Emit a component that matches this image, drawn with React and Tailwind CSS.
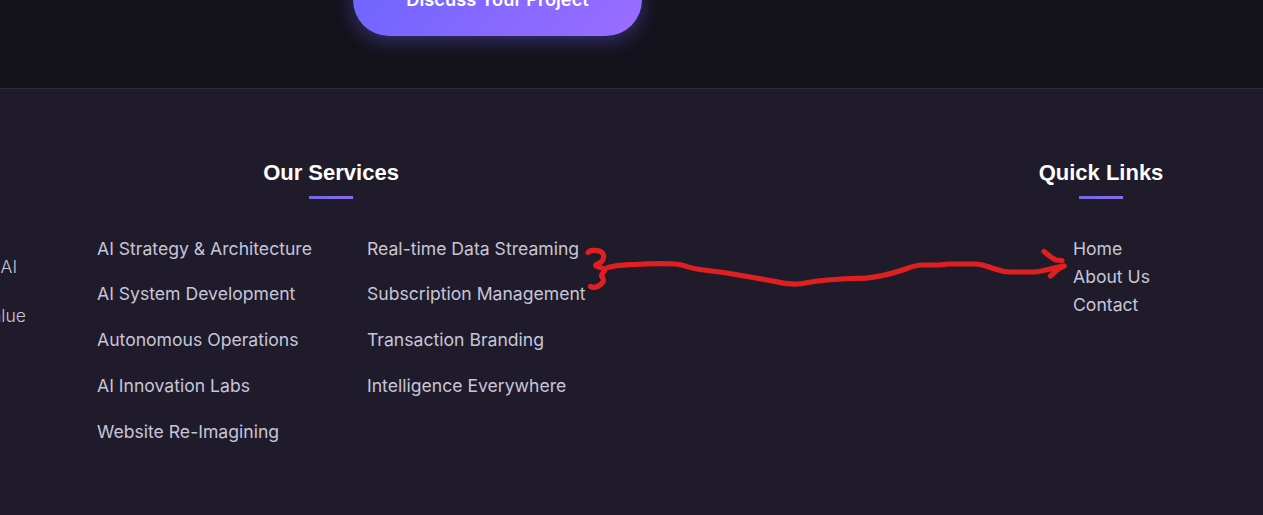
const serviceColumns = [
  [
    'AI Strategy & Architecture',
    'AI System Development',
    'Autonomous Operations',
    'AI Innovation Labs',
    'Website Re-Imagining',
  ],
  [
    'Real-time Data Streaming',
    'Subscription Management',
    'Transaction Branding',
    'Intelligence Everywhere',
  ],
];

const quickLinks = ['Home', 'About Us', 'Contact'];

function Heading({ children }) {
  return (
    <div className="flex flex-col items-center">
      <h3 className="h-9 whitespace-nowrap font-['Liberation_Sans',Arial,sans-serif] text-[22px] leading-[26px] font-bold text-white">
        {children}
      </h3>
      <div className="h-[3px] w-11 bg-linear-to-r from-[#7467ea] to-[#8a6ce8]" />
    </div>
  );
}

function Annotation() {
  return (
    <svg
      className="pointer-events-none absolute top-0 left-0"
      width="1263"
      height="515"
      viewBox="0 0 1263 515"
      fill="none"
      stroke="#e02020"
      strokeWidth="5.2"
      strokeLinecap="round"
      strokeLinejoin="round"
    >
      <path d="M588 252.500 C590 250 596 250 599.500 251 C604.500 253 604.500 258 602 261 C600 264 594.500 264 596 266 C598 268 605 267.500 605 269.500 C605 272 601.500 273 601.500 275.500 C602 278 605 279 602.500 282.500 C600 285.500 596 287.500 593 287.500 L590.500 286.500" />
      <path d="M608 267.500 C617 265 624 265 634 264.500 C650 263.500 666 263.500 676 264 C685 265 688 268 700 269.500 L727 273 L750 277 L773 281 C781 283 786 284.500 798 284 C808 283 811 281 827 280 L850 278.500 L866 278.200 C880 276.500 892 273.500 901 270.500 C909 268 914 265 923 265 L939 265 L948 264 L975 264 C983 264 988 267 995 269 C1002 271.500 1004 272 1011 272 L1034 272 C1044 271.500 1054 267.500 1064 266" />
      <path d="M1044 251.500 C1048 255 1052 258.500 1056 260 L1062 260.500" />
      <path d="M1064 266 C1057 268.500 1055 272 1050.500 276" />
    </svg>
  );
}

export default function App() {
  return (
    <div className="relative h-[515px] w-[1263px] overflow-hidden bg-[#14121b] font-[Inter,sans-serif] text-[#c8c5d9]">
      <section className="flex h-[88px] items-start pl-[353px]">
        <button className="-mt-9 flex h-[72px] w-[289px] items-center justify-center rounded-full bg-linear-135 from-[#6c63ff] to-[#9b6dff] text-[18.3px] font-semibold whitespace-nowrap text-white shadow-[0_4px_20px_rgba(108,99,255,0.4)]">
          Discuss Your Project
        </button>
      </section>
      <footer className="flex h-[427px] border-t border-[#2d2938] bg-[#1f1b2b] pt-[71px] text-[17.6px]">
        <div className="flex w-[97px] flex-col items-start pt-[82px] leading-[49px] font-light">
          <div className="flex w-[17px] justify-end whitespace-nowrap">AI</div>
          <div className="flex w-[26px] justify-end whitespace-nowrap">value</div>
        </div>
        <div className="w-[976px]">
          <div className="w-[468px]">
            <Heading>Our Services</Heading>
          </div>
          <div className="mt-[26.5px] flex leading-[45.75px]">
            {serviceColumns.map((items) => (
              <ul key={items[0]} className="w-[270px] whitespace-nowrap">
                {items.map((item) => (
                  <li key={item}>{item}</li>
                ))}
              </ul>
            ))}
          </div>
        </div>
        <div>
          <div className="-ml-[38px] w-[132px]">
            <Heading>Quick Links</Heading>
          </div>
          <ul className="mt-[36px] leading-7 whitespace-nowrap">
            {quickLinks.map((item) => (
              <li key={item}>{item}</li>
            ))}
          </ul>
        </div>
      </footer>
      <Annotation />
    </div>
  );
}
